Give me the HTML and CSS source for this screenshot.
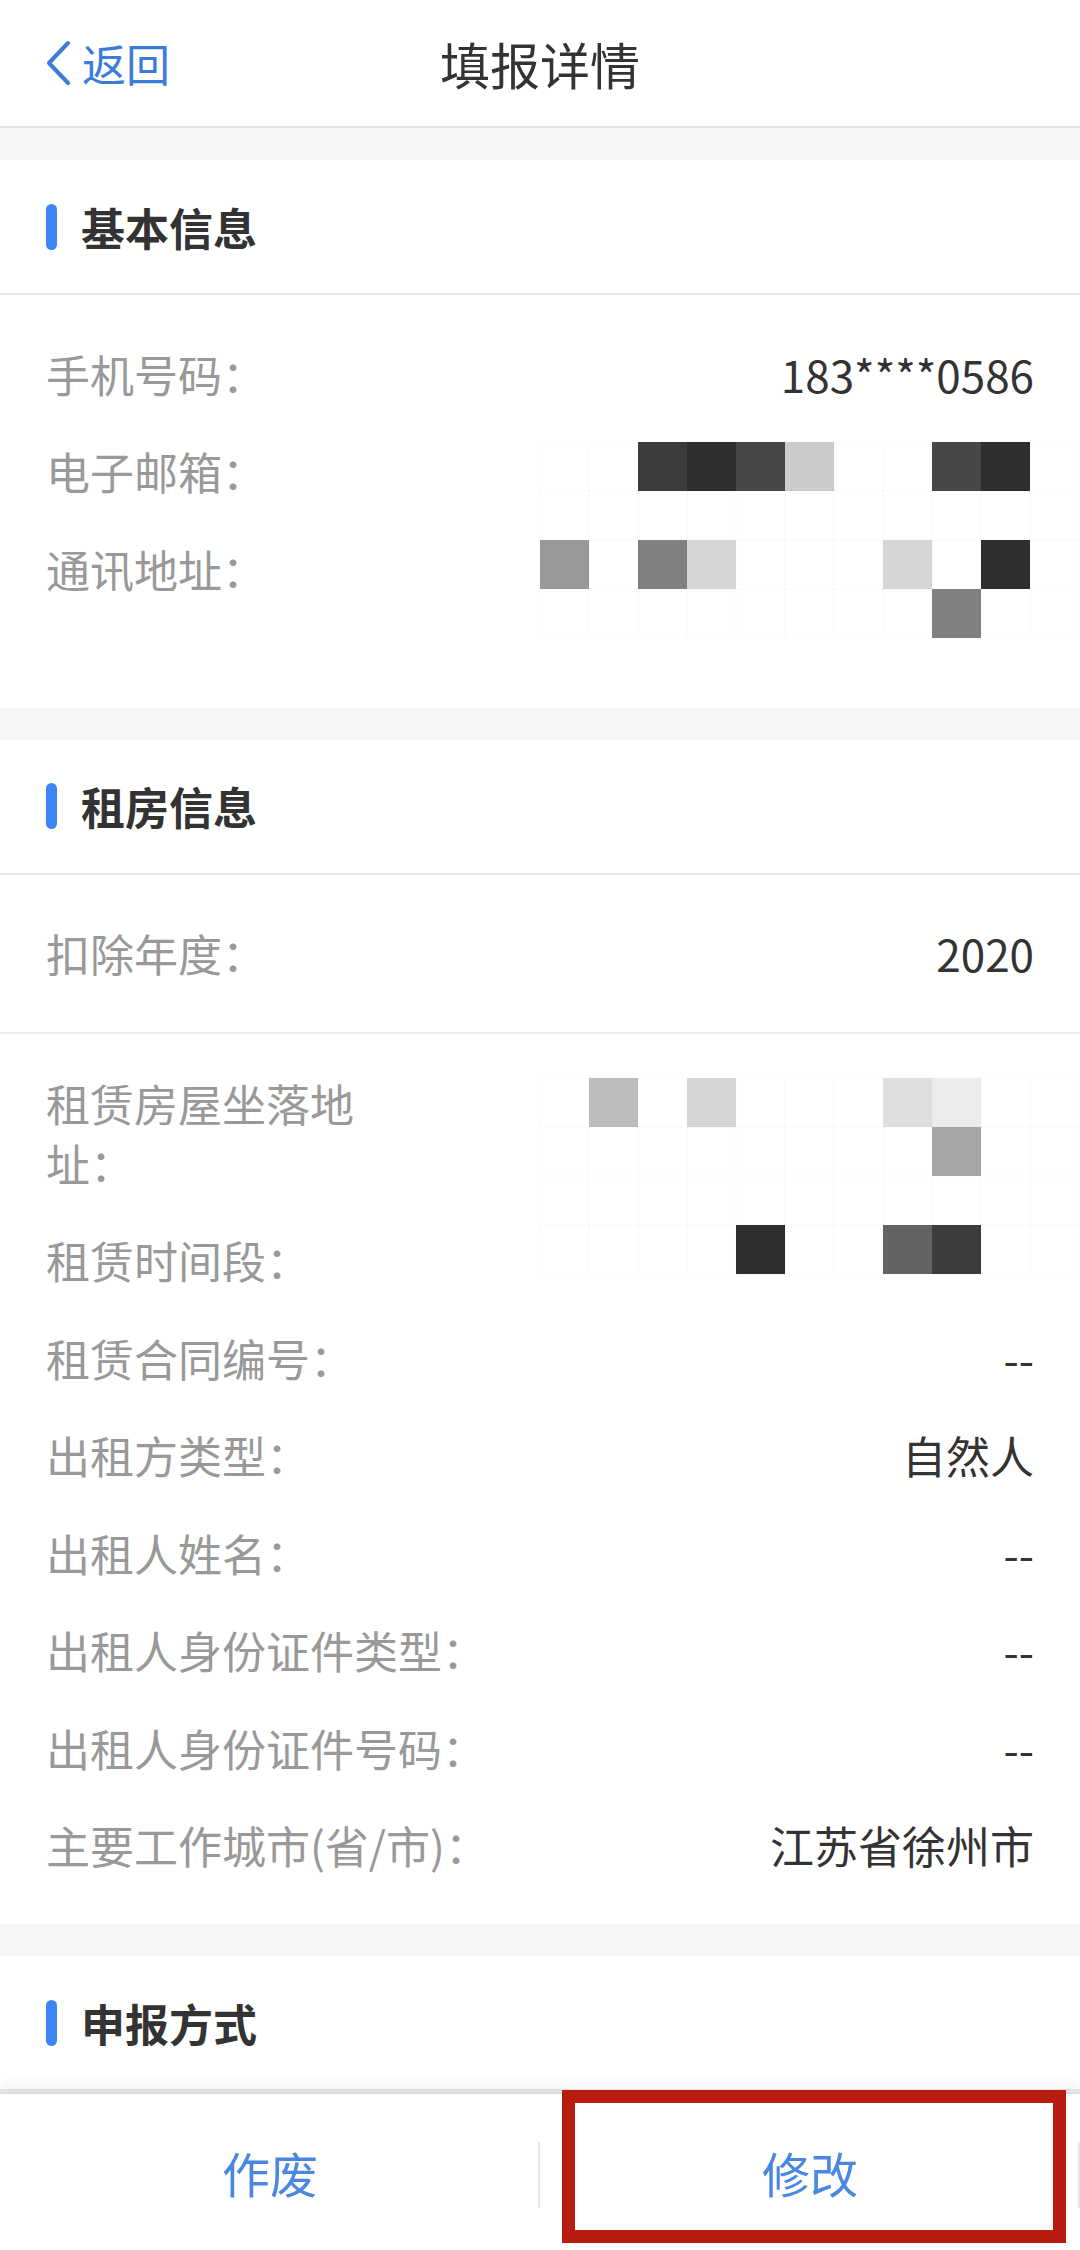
FILE: index.html
```html
<!DOCTYPE html>
<html lang="zh-CN">
<head>
  <meta charset="UTF-8">
  <meta name="viewport" content="width=device-width, initial-scale=1.0">
  <title>填报详情</title>
  <link rel="stylesheet" href="styles.css">
</head>
<body>

  <header class="topbar">
    <a class="back" href="#">
      <svg viewBox="0 0 28 46" fill="none" stroke="currentColor" stroke-width="4" stroke-linecap="round" stroke-linejoin="round">
        <polyline points="24,3 5,23 24,43"/>
      </svg>
      <span>返回</span>
    </a>
    <h1 class="title">填报详情</h1>
    <span></span>
  </header>

  <!-- 基本信息 -->
  <section class="section">
    <h2 class="section-head">基本信息</h2>
    <div class="list">
      <div class="row">
        <span class="label">手机号码：</span>
        <span class="value">183****0586</span>
      </div>
      <div class="row">
        <span class="label">电子邮箱：</span>
        <span class="value"></span>
      </div>
      <div class="row tall">
        <span class="label">通讯地址：</span>
        <span class="value"></span>
      </div>
    </div>

    <div class="mosaic mosaic-contact">
      <i></i><i></i><i class="d2"></i><i class="d1"></i><i class="d3"></i><i class="l2"></i><i></i><i></i><i class="d3"></i><i class="d1"></i><i></i>
      <i></i><i></i><i></i><i></i><i></i><i></i><i></i><i></i><i></i><i></i><i></i>
      <i class="m3"></i><i></i><i class="m2"></i><i class="l3"></i><i></i><i></i><i></i><i class="l3"></i><i></i><i class="d1"></i><i></i>
      <i></i><i></i><i></i><i></i><i></i><i></i><i></i><i></i><i class="m2"></i><i></i><i></i>
    </div>
  </section>

  <!-- 租房信息 -->
  <section class="section">
    <h2 class="section-head">租房信息</h2>
    <div class="list split">
      <div class="row">
        <span class="label">扣除年度：</span>
        <span class="value">2020</span>
      </div>
    </div>
    <div class="list tight">
      <div class="row tall">
        <span class="label narrow">租赁房屋坐落地址：</span>
        <span class="value"></span>
      </div>
      <div class="row">
        <span class="label">租赁时间段：</span>
        <span class="value"></span>
      </div>
      <div class="row">
        <span class="label">租赁合同编号：</span>
        <span class="value">--</span>
      </div>
      <div class="row">
        <span class="label">出租方类型：</span>
        <span class="value">自然人</span>
      </div>
      <div class="row">
        <span class="label">出租人姓名：</span>
        <span class="value">--</span>
      </div>
      <div class="row">
        <span class="label">出租人身份证件类型：</span>
        <span class="value">--</span>
      </div>
      <div class="row">
        <span class="label">出租人身份证件号码：</span>
        <span class="value">--</span>
      </div>
      <div class="row">
        <span class="label">主要工作城市(省/市)：</span>
        <span class="value">江苏省徐州市</span>
      </div>
    </div>

    <div class="mosaic mosaic-rent">
      <i></i><i class="l1"></i><i></i><i class="l3"></i><i></i><i></i><i></i><i class="l4"></i><i class="l5"></i><i></i><i></i>
      <i></i><i></i><i></i><i></i><i></i><i></i><i></i><i></i><i class="m4"></i><i></i><i></i>
      <i></i><i></i><i></i><i></i><i></i><i></i><i></i><i></i><i></i><i></i><i></i>
      <i></i><i></i><i></i><i></i><i class="d1"></i><i></i><i></i><i class="m1"></i><i class="d2"></i><i></i><i></i>
    </div>
  </section>

  <!-- 申报方式 -->
  <section class="section">
    <h2 class="section-head">申报方式</h2>
  </section>

  <nav class="actions">
    <a class="action" href="#">作废</a>
    <a class="action" href="#">
      修改
      <span class="highlight"></span>
    </a>
  </nav>

</body>
</html>
```

FILE: styles.css
```css
/* Global styles */
* {
  margin: 0;
  padding: 0;
  box-sizing: border-box;
}

body {
  font-family: "Noto Sans CJK SC", "Noto Sans", sans-serif;
  background: #f5f6f8;
  color: #333;
  padding-bottom: 160px;
}

a {
  text-decoration: none;
}

/* Top bar */
.topbar {
  height: 128px;
  background: #fff;
  border-bottom: 2px solid #e3e3e5;
  display: grid;
  grid-template-columns: 1fr auto 1fr;
  align-items: center;
  padding: 0 44px;
}

.back {
  display: flex;
  align-items: center;
  gap: 10px;
  color: #3b7bd9;
  font-size: 44px;
}

.back svg {
  width: 28px;
  height: 46px;
}

.title {
  font-size: 50px;
  font-weight: 400;
  color: #333;
}

/* Sections */
.section {
  position: relative;
  background: #fff;
  margin-top: 32px;
}

.section-head {
  height: 135px;
  border-bottom: 2px solid #e8e8e8;
  display: flex;
  align-items: center;
  gap: 24px;
  padding-left: 46px;
  font-size: 44px;
  font-weight: 700;
  color: #333;
}

.section-head::before {
  content: "";
  width: 11px;
  height: 46px;
  border-radius: 6px;
  background: #3d85f6;
}

.list {
  padding: 30px 46px;
}

.list.split {
  border-bottom: 2px solid #ececec;
}

.list.tight {
  padding-top: 20px;
}

.row {
  display: flex;
  justify-content: space-between;
  gap: 20px;
  padding: 18.75px 0;
  font-size: 44px;
  line-height: 60px;
}

.row.tall {
  min-height: 157.5px;
}

.label {
  color: #999;
  white-space: nowrap;
}

.label.narrow {
  width: 320px;
  white-space: normal;
}

.value {
  color: #333;
  text-align: right;
}

/* Redacted blocks */
.mosaic {
  position: absolute;
  left: 540px;
  display: grid;
  grid-template-columns: repeat(11, 49px);
  grid-auto-rows: 49px;
}

.mosaic i {
  outline: 1px solid rgba(0, 0, 0, 0.012);
}

.mosaic-contact {
  top: 282px;
}

.mosaic-rent {
  top: 338px;
}

.mosaic .d1 { background: #2e2e2e; }
.mosaic .d2 { background: #3c3c3c; }
.mosaic .d3 { background: #474747; }
.mosaic .m1 { background: #636363; }
.mosaic .m2 { background: #808080; }
.mosaic .m3 { background: #999; }
.mosaic .m4 { background: #a6a6a6; }
.mosaic .l1 { background: #bdbdbd; }
.mosaic .l2 { background: #ccc; }
.mosaic .l3 { background: #d6d6d6; }
.mosaic .l4 { background: #dedede; }
.mosaic .l5 { background: #ececec; }

/* Bottom actions */
.actions {
  position: fixed;
  left: 0;
  right: 0;
  bottom: 0;
  height: 158px;
  display: flex;
  background: #fff;
  border-top: 2px solid #dcdcdc;
  box-shadow: 0 -8px 14px rgba(0, 0, 0, 0.05);
}

.action {
  position: relative;
  flex: 1;
  display: flex;
  align-items: center;
  justify-content: center;
  font-size: 48px;
  color: #4a87e0;
}

.action::after {
  content: "";
  position: absolute;
  right: 0;
  top: 48px;
  width: 2px;
  height: 66px;
  background: #e6e6e6;
}

.highlight {
  position: absolute;
  left: 22px;
  right: 14px;
  top: -4px;
  bottom: 7px;
  border: 13px solid #b81c10;
}
```
